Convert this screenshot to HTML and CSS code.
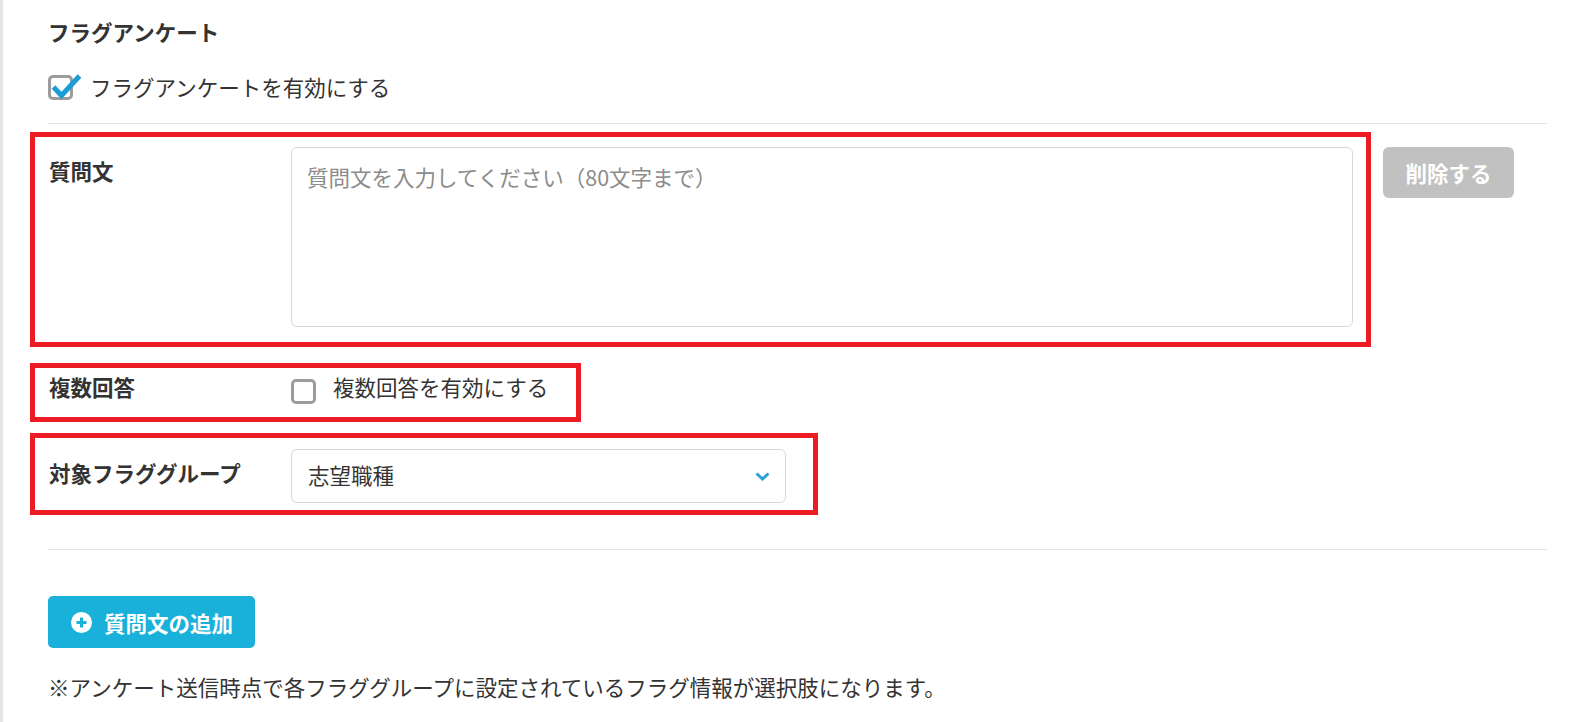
FILE: index.html
```html
<!DOCTYPE html>
<html lang="ja">
<head>
    <meta charset="UTF-8">
    <meta name="viewport" content="width=device-width, initial-scale=1.0">
    <title>フラグアンケート</title>
    <link rel="stylesheet" href="styles.css">
</head>
<body>

<div class="page">
    <h2 class="section-title">フラグアンケート</h2>

    <label class="check check-main">
        <span class="check-box">
            <svg class="check-mark" width="34" height="26" viewBox="0 0 34 26">
                <polyline points="5.5,13 13.5,21.5 31.5,2" fill="none" stroke="#1d9bd7" stroke-width="5" stroke-linecap="butt" stroke-linejoin="miter"/>
            </svg>
        </span>
        <span class="check-text">フラグアンケートを有効にする</span>
    </label>

    <hr class="divider">

    <!-- question text -->
    <div class="question">
        <div class="mark mark-question">
            <div class="field-label">質問文</div>
            <textarea class="question-text" placeholder="質問文を入力してください（80文字まで）"></textarea>
        </div>
        <button class="btn-delete">削除する</button>
    </div>

    <!-- multiple answers -->
    <div class="mark mark-multi">
        <div class="field-label">複数回答</div>
        <label class="check check-sub">
            <span class="check-box"></span>
            <span class="check-text">複数回答を有効にする</span>
        </label>
    </div>

    <!-- flag group -->
    <div class="mark mark-group">
        <div class="field-label">対象フラググループ</div>
        <div class="select">
            <span>志望職種</span>
            <svg width="15" height="9" viewBox="0 0 15 9">
                <polyline points="1.5,1.5 7.5,7 13.5,1.5" fill="none" stroke="#2a9fd8" stroke-width="3"/>
            </svg>
        </div>
    </div>

    <hr class="divider divider-bottom">

    <button class="btn-add">
        <svg width="21" height="21" viewBox="0 0 21 21">
            <circle cx="10.5" cy="10.5" r="10.5" fill="#ffffff"/>
            <path d="M10.5 5.5v10M5.5 10.5h10" stroke="#19b1d9" stroke-width="3"/>
        </svg>
        <span>質問文の追加</span>
    </button>

    <p class="note">※アンケート送信時点で各フラググループに設定されているフラグ情報が選択肢になります。</p>
</div>

</body>
</html>
```

FILE: styles.css
```css
body {
    margin: 0;
    font-family: "Noto Sans CJK JP", "Noto Sans", sans-serif;
    font-size: 21.5px;
    color: #333333;
    background-color: #ffffff;
}
.page {
    box-sizing: border-box;
    min-height: 722px;
    border-left: 3px solid #e4e4e4;
    padding: 16px 45px 0 45px;
}
.section-title {
    margin: 0;
    font-size: 21.5px;
    font-weight: bold;
    line-height: 32px;
}
.check {
    display: flex;
    align-items: flex-start;
    gap: 17px;
    line-height: 32px;
    cursor: pointer;
}
.check-main {
    margin-top: 23px;
}
.check-main .check-box {
    margin-top: 4px;
}
.check-sub .check-box {
    margin-top: 8px;
}
.check-box {
    position: relative;
    box-sizing: border-box;
    width: 25px;
    height: 25px;
    border: 3px solid #9c9c9c;
    border-radius: 5px;
    flex-shrink: 0;
}
/* the tick sticks out of the box */
.check-mark {
    position: absolute;
    left: -3px;
    top: -4px;
    overflow: visible;
}
.divider {
    border: 0;
    border-top: 1px solid #e4e4e4;
    margin: 20px 0 0;
}
/* red highlight frames */
.mark {
    box-sizing: border-box;
    display: flex;
    align-items: flex-start;
    border: 5px solid #ed1c24;
    margin-left: -18px;
}
.field-label {
    width: 242px;
    flex-shrink: 0;
    font-weight: bold;
    line-height: 32px;
}
.question {
    display: flex;
    align-items: flex-start;
    margin-top: 8px;
}
.mark-question {
    width: 1341px;
    padding: 10px 13px 15px 14px;
}
.mark-question .field-label {
    margin-top: 8px;
}
.question-text {
    box-sizing: border-box;
    width: 1062px;
    height: 180px;
    border: 1px solid #d8d8d8;
    border-radius: 6px;
    padding: 13px 15px;
    font-family: inherit;
    font-size: 21.5px;
    line-height: 32px;
    color: #333333;
    resize: none;
}
.question-text::placeholder {
    color: #8c8c8c;
}
.btn-delete {
    width: 131px;
    height: 51px;
    margin: 15px 0 0 12px;
    border: none;
    border-radius: 6px;
    background-color: #c1c1c1;
    color: #ffffff;
    font-family: inherit;
    font-size: 21.5px;
    font-weight: bold;
    padding: 0;
}
.mark-multi {
    width: 551px;
    margin-top: 16px;
    padding: 3px 0 13px 14px;
}
.mark-group {
    width: 788px;
    margin-top: 11px;
    padding: 11px 0 7px 14px;
}
.mark-group .field-label {
    margin-top: 8px;
}
.select {
    box-sizing: border-box;
    width: 495px;
    height: 54px;
    display: flex;
    align-items: center;
    justify-content: space-between;
    padding: 0 15px 0 16px;
    border: 1px solid #d8d8d8;
    border-radius: 6px;
    line-height: 32px;
}
.select span {
    margin-top: -3px;
}
.divider-bottom {
    margin-top: 34px;
}
.btn-add {
    display: flex;
    align-items: center;
    gap: 12px;
    width: 207px;
    height: 52px;
    margin-top: 46px;
    padding: 0 0 0 23px;
    border: none;
    border-radius: 5px;
    background-color: #19b1d9;
    color: #ffffff;
    font-family: inherit;
    font-size: 21.5px;
    font-weight: bold;
    cursor: pointer;
}
.note {
    margin: 23px 0 0;
    line-height: 32px;
}
```
